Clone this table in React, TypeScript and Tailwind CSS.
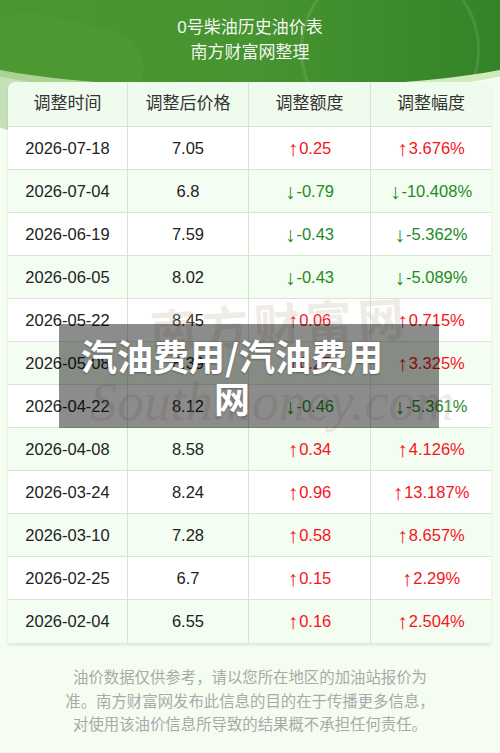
const rows = [
  { date: "2026-07-18", price: "7.05", diff: "0.25", pct: "3.676%", up: true },
  { date: "2026-07-04", price: "6.8", diff: "-0.79", pct: "-10.408%", up: false },
  { date: "2026-06-19", price: "7.59", diff: "-0.43", pct: "-5.362%", up: false },
  { date: "2026-06-05", price: "8.02", diff: "-0.43", pct: "-5.089%", up: false },
  { date: "2026-05-22", price: "8.45", diff: "0.06", pct: "0.715%", up: true },
  { date: "2026-05-08", price: "8.39", diff: "0.27", pct: "3.325%", up: true },
  { date: "2026-04-22", price: "8.12", diff: "-0.46", pct: "-5.361%", up: false },
  { date: "2026-04-08", price: "8.58", diff: "0.34", pct: "4.126%", up: true },
  { date: "2026-03-24", price: "8.24", diff: "0.96", pct: "13.187%", up: true },
  { date: "2026-03-10", price: "7.28", diff: "0.58", pct: "8.657%", up: true },
  { date: "2026-02-25", price: "6.7", diff: "0.15", pct: "2.29%", up: true },
  { date: "2026-02-04", price: "6.55", diff: "0.16", pct: "2.504%", up: true },
];

const headers = ["调整时间", "调整后价格", "调整额度", "调整幅度"];

const Change = ({ up, value, last }: { up: boolean; value: string; last?: boolean }) => (
  <div
    className={`flex items-center justify-center ${last ? "" : "border-r border-[#d3e5cd]"} ${
      up ? "text-[#f5141c]" : "text-[#1f8a1f]"
    }`}
  >
    <span className="text-[21px] leading-none mr-[1px]">{up ? "↑" : "↓"}</span>
    {value}
  </div>
);

export default function App() {
  return (
    <div
      className="relative w-[500px] h-[753px] overflow-hidden bg-[#f5fdf1]"
      style={{ fontFamily: '"Liberation Sans", "Noto Sans CJK SC", sans-serif' }}
    >
      {/* banner background */}
      <div className="absolute left-[-60px] right-[-60px] top-0 h-[96px] rounded-b-[50%] bg-[#cfeabb]" />
      <div className="absolute left-[-60px] right-[-60px] top-0 h-[88px] rounded-b-[50%] bg-gradient-to-r from-[#4b972f] via-[#479430] to-[#2f7f27]" />
      <div className="absolute left-[-20px] top-[20px] w-[160px] h-[120px] rounded-[40px] bg-[#5aa03a]/30 rotate-12" />
      <div className="absolute right-[20px] top-[-40px] w-[180px] h-[180px] rounded-full border-[3px] border-white/10" />

      <div className="relative flex flex-col">
        <div className="pt-[15px] mb-[17px] text-center text-white/95 text-[17px] leading-[25px]">
          <div>0号柴油历史油价表</div>
          <div>南方财富网整理</div>
        </div>

        <div className="mx-[8px] w-[483px] rounded-t-[7px] overflow-hidden shadow-[0_2px_3px_rgba(0,80,0,0.12)]">
          <div className="grid grid-cols-[120px_121px_122px_120px] h-[45px] bg-[#effbec] border-b border-[#d3e5cd] text-[17px] text-[#333]">
            {headers.map((h, i) => (
              <div
                key={h}
                className={`flex items-center justify-center ${i < 3 ? "border-r border-[#d3e5cd]" : ""}`}
              >
                {h}
              </div>
            ))}
          </div>
          {rows.map((r, idx) => (
            <div
              key={r.date}
              className={`grid grid-cols-[120px_121px_122px_120px] h-[43px] text-[16.5px] text-[#222] ${
                idx % 2 === 0 ? "bg-white" : "bg-[#f4fdf1]"
              } ${idx < rows.length - 1 ? "border-b border-[#d6e7d0]" : ""}`}
            >
              <div className="flex items-center justify-center border-r border-[#d3e5cd]">{r.date}</div>
              <div className="flex items-center justify-center border-r border-[#d3e5cd]">{r.price}</div>
              <Change up={r.up} value={r.diff} />
              <Change up={r.up} value={r.pct} last />
            </div>
          ))}
        </div>

        <div className="mt-[23px] text-center text-[15.4px] leading-[23.5px] text-[#a9a9a9]">
          <div>油价数据仅供参考，请以您所在地区的加油站报价为</div>
          <div>准。南方财富网发布此信息的目的在于传播更多信息，</div>
          <div>对使用该油价信息所导致的结果概不承担任何责任。</div>
        </div>
      </div>

      {/* watermark */}
      <div className="absolute left-[150px] top-[292px] text-[46px] font-bold text-[#c8b9a8]/30 tracking-[6px] rotate-[-3deg]">
        南方财富网
      </div>
      <div
        className="absolute left-[90px] top-[362px] text-[54px] italic text-[#c8b9a8]/30"
        style={{ fontFamily: '"Liberation Serif", serif' }}
      >
        Southmoney.com
      </div>

      {/* overlay title */}
      <div
        className="absolute left-[59px] top-[324px] w-[380px] h-[104px] bg-black/45 pl-[18px] pr-[52px] pt-[10px] text-center text-white font-bold text-[36px] leading-[42px] [text-shadow:0_1px_2px_rgba(0,0,0,0.3)]"
        style={{ fontFamily: '"Noto Sans CJK SC", sans-serif' }}
      >
        汽油费用/汽油费用网
      </div>
    </div>
  );
}
